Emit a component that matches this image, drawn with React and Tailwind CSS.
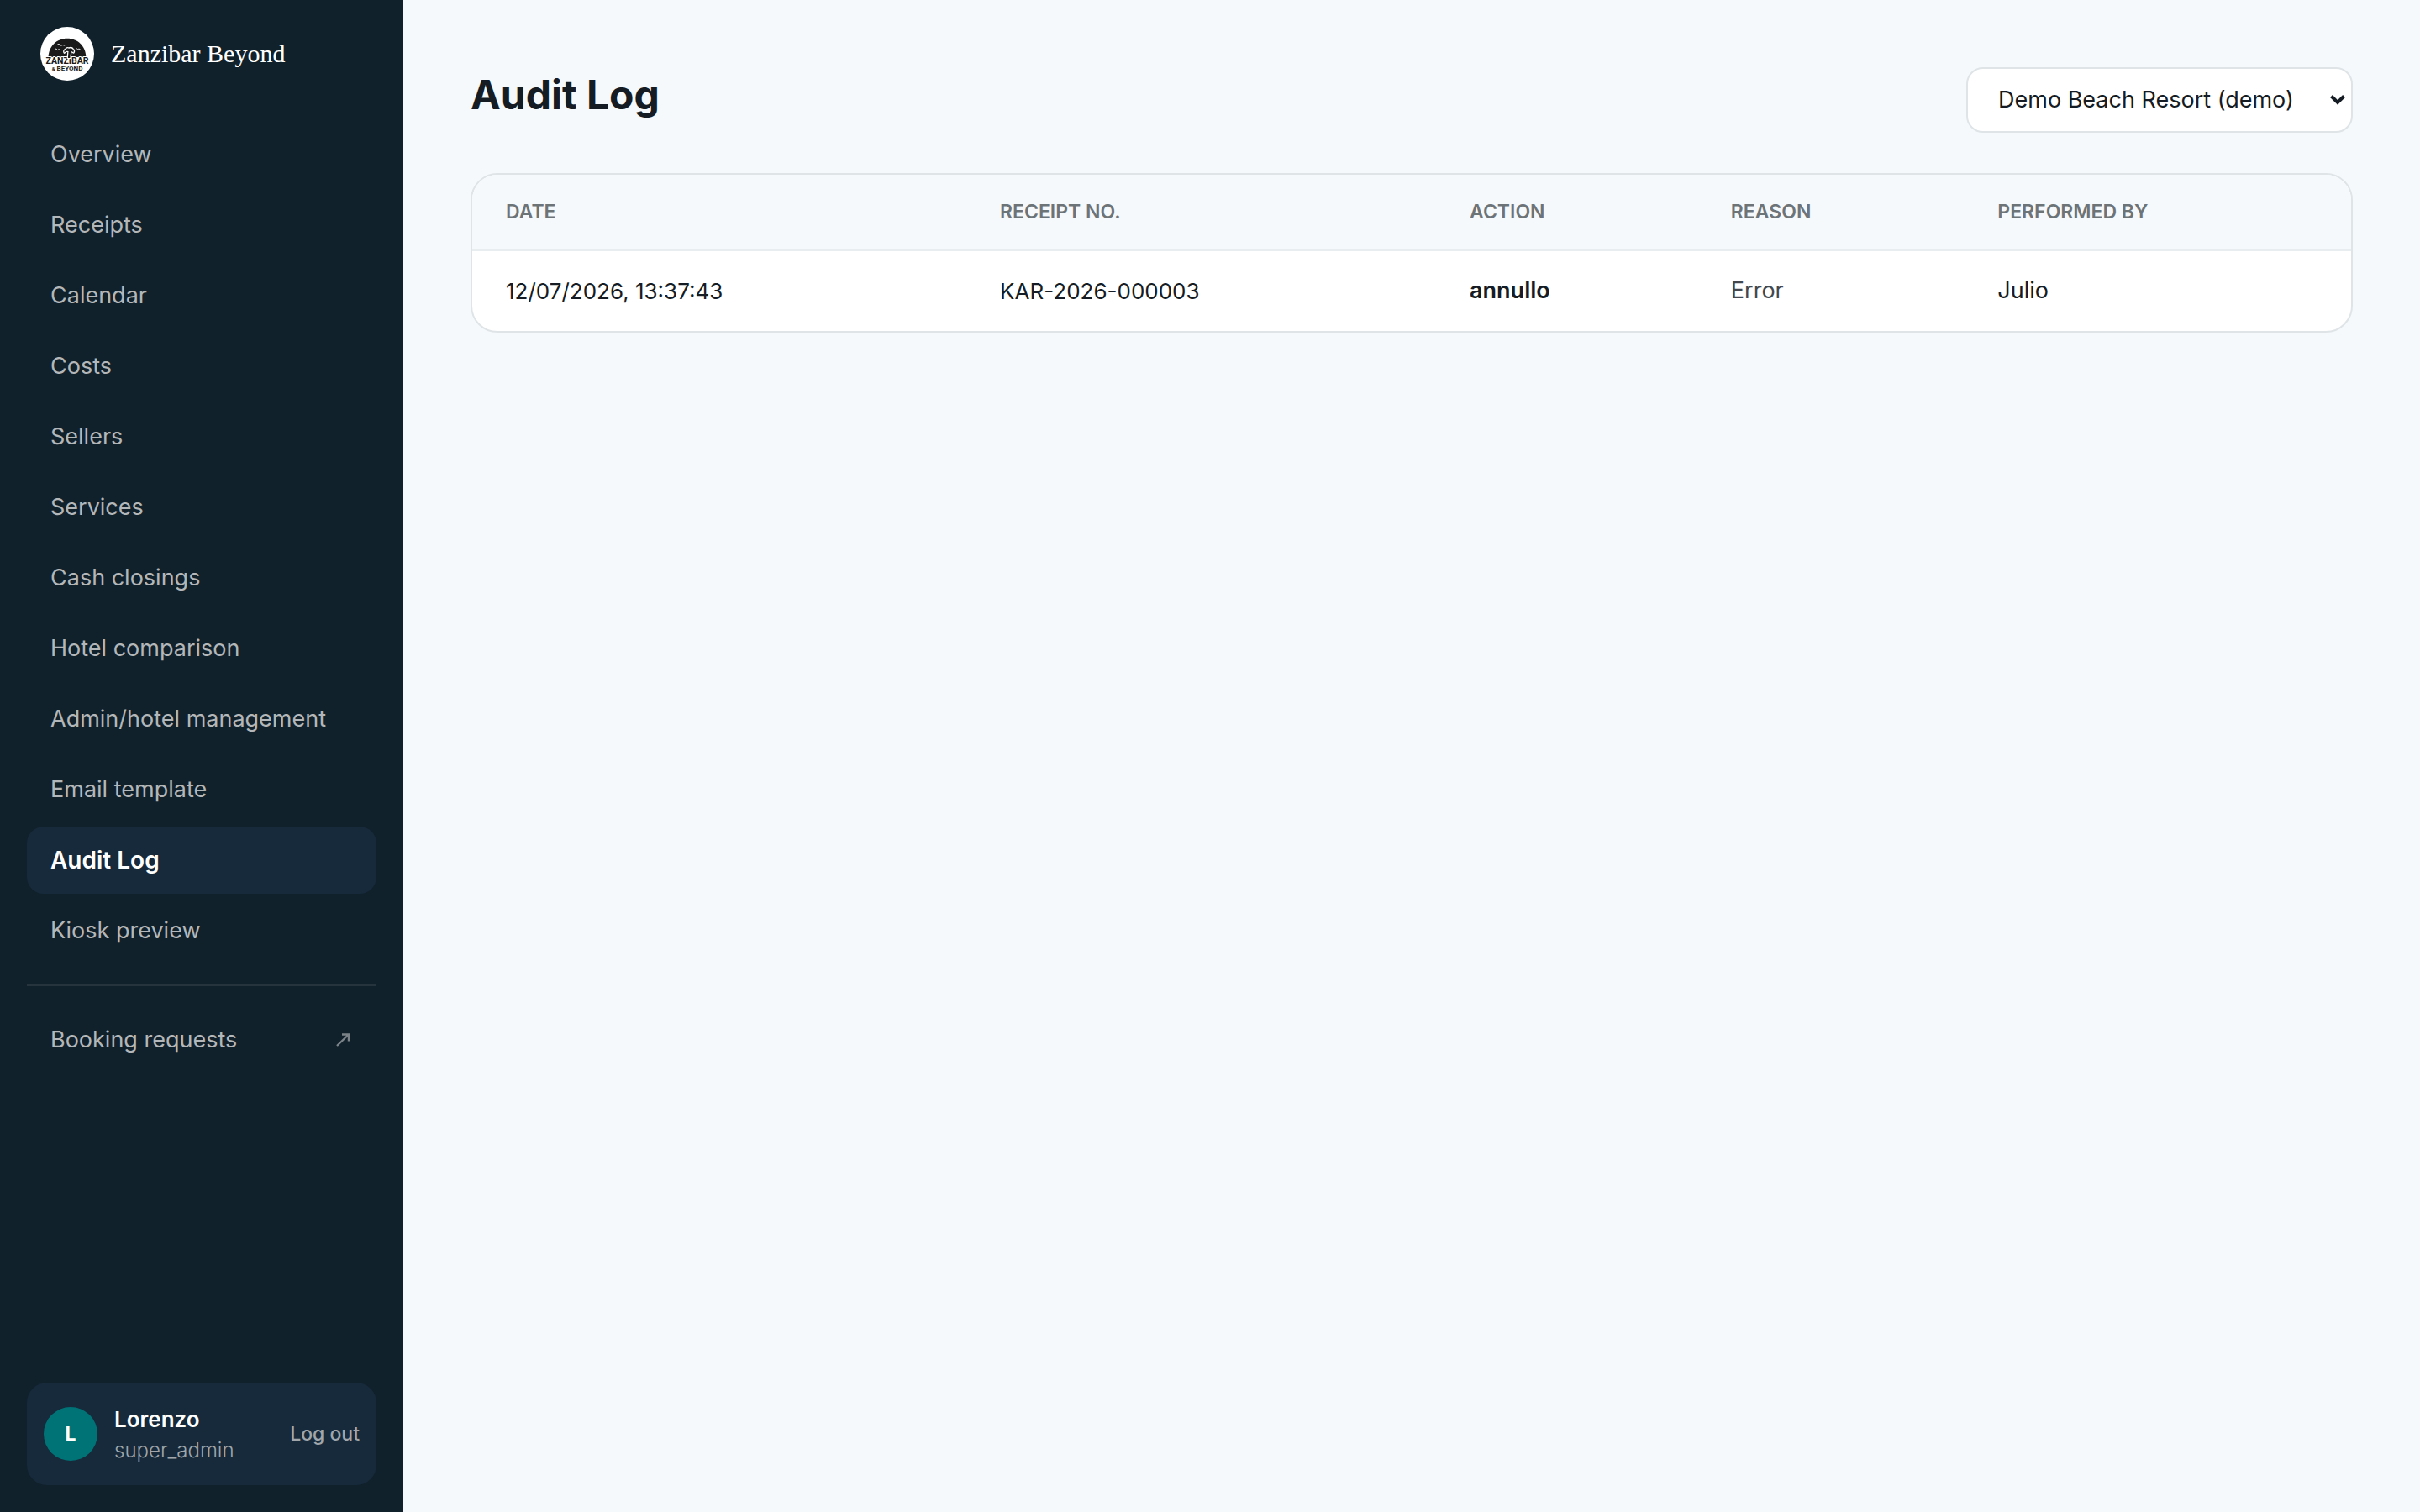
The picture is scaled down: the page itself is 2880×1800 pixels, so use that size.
import React, { useState } from 'react';
import clsx from 'clsx';

const NAV_ITEMS = [
  'Overview',
  'Receipts',
  'Calendar',
  'Costs',
  'Sellers',
  'Services',
  'Cash closings',
  'Hotel comparison',
  'Admin/hotel management',
  'Email template',
  'Audit Log',
  'Kiosk preview',
];

const COLUMNS = [
  { label: 'Date', width: 'w-[26.3%]' },
  { label: 'Receipt no.', width: 'w-[25%]' },
  { label: 'Action', width: 'w-[13.9%]' },
  { label: 'Reason', width: 'w-[14.2%]' },
  { label: 'Performed by', width: 'w-[20.6%]' },
];

const ENTRIES = [
  {
    date: '12/07/2026, 13:37:43',
    receipt: 'KAR-2026-000003',
    action: 'annullo',
    reason: 'Error',
    user: 'Julio',
  },
];

const Logo = () => (
  <svg viewBox="0 0 64 64" className="h-16 w-16 shrink-0" role="img" aria-label="Zanzibar & Beyond">
    <circle cx="32" cy="32" r="32" fill="#fff" />
    {/* sun dome */}
    <path d="M9.5 36C10 23 19.5 13.8 32 13.8S54 23 54.3 36Z" fill="#1a1a1a" />
    {/* birds */}
    <g fill="none" stroke="#fff" strokeWidth="0.9" strokeLinecap="round" strokeLinejoin="round">
      <path d="M21 20.5q2.5-.3 3.6 1.7q1.9-1.2 4.2-.2" />
      <path d="M17.5 26q2-.2 2.9 1.5q1.3-1.2 3-.6" />
      <path d="M42.5 25.5q1.4 0 2 1.3q1.1-1 2.6-.4" />
    </g>
    <g
      fill="#1a1a1a"
      stroke="#fff"
      strokeWidth="2"
      paintOrder="stroke"
      strokeLinejoin="round"
      textAnchor="middle"
      className="font-['Roboto','Liberation_Sans',sans-serif] font-bold"
    >
      <text x="32" y="43.5" fontSize="10.5">ZANZIBAR</text>
      <text x="32" y="52" fontSize="8">
        <tspan fontSize="6">&amp;</tspan> BEYOND
      </text>
    </g>
    {/* palm, its trunk running into the I */}
    <path
      d="M28.6 30.5q-.8-2.7 1.7-3.6q1.2-2.4 3.8-1.2q3-1.5 4.6 1q1.9 1.3.8 3.7q-1.4-1.7-3.2-1.5l-1 8h-2.400l.6-7.800q-2.900-1-4.900 1.400Z"
      fill="#1a1a1a"
      stroke="#fff"
      strokeWidth="2.6"
      paintOrder="stroke"
      strokeLinejoin="round"
    />
  </svg>
);

const Sidebar = ({ active, onSelect }) => (
  <aside className="flex w-[480px] shrink-0 flex-col bg-[#11212b] px-8 pt-8 pb-8">
    <div className="flex items-center gap-5 px-4">
      <Logo />
      <span className="font-['Liberation_Serif',serif] text-[30px] leading-10 text-white">
        Zanzibar Beyond
      </span>
    </div>

    <nav className="mt-12 flex flex-col gap-1">
      {NAV_ITEMS.map((item) => (
        <button
          key={item}
          type="button"
          onClick={() => onSelect(item)}
          className={clsx(
            'flex h-20 items-center rounded-[20px] px-7 text-left whitespace-nowrap',
            item === active
              ? 'bg-[#162a3b] text-[28px] font-semibold text-white'
              : 'text-[27px] text-[#b3b7b9]',
          )}
        >
          {item}
        </button>
      ))}
    </nav>

    <div className="mt-6 border-t-2 border-[#26343e] pt-6">
      <a href="#booking" className="flex h-20 items-center justify-between px-7 text-[27px] text-[#b3b7b9]">
        <span>Booking requests</span>
        <svg viewBox="0 0 20 16" className="h-4 w-5" fill="none" stroke="#7b8389" strokeWidth="2.4" aria-hidden="true">
          <path d="M1 15L15 1.5M7 1.5H15V9.5" />
        </svg>
      </a>
    </div>

    <div className="mt-auto flex items-center gap-5 rounded-3xl bg-[#162a3b] px-5 py-6">
      <div className="flex h-16 w-16 shrink-0 items-center justify-center rounded-full bg-[#007377] text-[23px] font-bold text-white">
        L
      </div>
      <div className="min-w-0 flex-1">
        <div className="text-[26px] leading-10 font-semibold text-white">Lorenzo</div>
        <div className="text-[24px] leading-[34px] font-light text-[#a0a6ab]">super_admin</div>
      </div>
      <button type="button" className="text-[23px] font-medium text-[#a0a6ab]">
        Log out
      </button>
    </div>
  </aside>
);

const HotelSelect = ({ value, onChange }) => (
  <div className="relative">
    <select
      aria-label="Hotel"
      value={value}
      onChange={(e) => onChange(e.target.value)}
      className="h-[78px] w-[460px] appearance-none rounded-[20px] border-2 border-[#dfe4e7] bg-white px-9 text-[27px]"
    >
      <option value="demo">Demo Beach Resort (demo)</option>
    </select>
    <div className="pointer-events-none absolute inset-y-0 right-2 flex items-center">
      <svg viewBox="0 0 20 14" className="h-3.5 w-5" fill="none" stroke="#151c24" strokeWidth="4" aria-hidden="true">
        <path d="M2.5 2.5L10 10L17.5 2.5" />
      </svg>
    </div>
  </div>
);

const App = () => {
  const [active, setActive] = useState('Audit Log');
  const [hotel, setHotel] = useState('demo');

  return (
    <div className="flex min-h-screen bg-[#f5f9fc] font-['Inter','Liberation_Sans',sans-serif] text-[#151c24]">
      <Sidebar active={active} onSelect={setActive} />

      <main className="min-w-0 flex-1 p-20">
        <div className="mb-12 flex items-start justify-between">
          <h1 className="text-[48px] leading-[66px] font-bold">Audit Log</h1>
          <HotelSelect value={hotel} onChange={setHotel} />
        </div>

        <div className="overflow-hidden rounded-[32px] border-2 border-[#dfe4e7] bg-white">
          <table className="w-full table-fixed text-left">
            <thead className="bg-[#f5f9fc] text-[23px] text-[#6d7478] uppercase">
              <tr className="h-[90px] border-b-2 border-[#e8edf0]">
                {COLUMNS.map((col) => (
                  <th key={col.label} scope="col" className={clsx('px-10 font-semibold', col.width)}>
                    {col.label}
                  </th>
                ))}
              </tr>
            </thead>
            <tbody className="text-[27px]">
              {ENTRIES.map((entry) => (
                <tr key={entry.receipt} className="h-24">
                  <td className="px-10 text-[26px]">{entry.date}</td>
                  <td className="px-10 text-[26px]">{entry.receipt}</td>
                  <td className="px-10 font-semibold">{entry.action}</td>
                  <td className="px-10 text-[#43484e]">{entry.reason}</td>
                  <td className="px-10">{entry.user}</td>
                </tr>
              ))}
            </tbody>
          </table>
        </div>
      </main>
    </div>
  );
};

export default App;
